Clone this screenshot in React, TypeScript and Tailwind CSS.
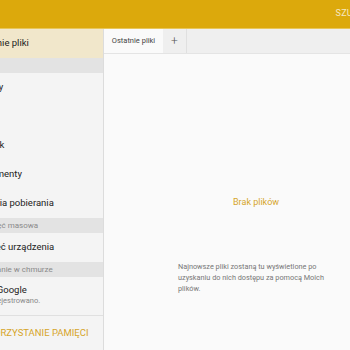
const font = { fontFamily: 'Roboto, "Noto Sans", sans-serif' }

function Item({ label, active = false }: { label: string; active?: boolean }) {
  return (
    <div className={`flex h-[29px] items-center ${active ? 'bg-[#f1e7cb]' : ''}`}>
      <span className="-ml-[26px] whitespace-nowrap text-[9.5px] text-[#222]">{label}</span>
    </div>
  )
}

function Header({ label, shift }: { label: string; shift: string }) {
  return (
    <div className="flex h-[15px] items-center bg-[#e3e3e3]">
      <span className={`whitespace-nowrap text-[8px] text-[#8a8a8a] ${shift}`}>{label}</span>
    </div>
  )
}

export default function App() {
  return (
    <div className="flex h-[350px] w-[350px] flex-col overflow-hidden bg-[#fafafa]" style={font}>
      {/* Top bar */}
      <div className="flex h-[29px] shrink-0 items-center justify-end overflow-hidden border-b border-[#e8c65a] bg-[#dca90c]">
        <span className="-mr-[20px] text-[9px] tracking-wide text-white/75">SZUKAJ</span>
      </div>

      <div className="flex min-h-0 flex-1">
        {/* Sidebar */}
        <div className="flex w-[104px] shrink-0 flex-col overflow-hidden border-r border-[#dcdcdc] bg-[#f4f4f4]">
          <Item label="Ostatnie pliki" active />
          <div className="h-[15px] bg-[#e3e3e3]" />
          <Item label="Obrazy" />
          <Item label="Filmy" />
          <Item label="Dźwięk" />
          <Item label="Dokumenty" />
          <Item label="Historia pobierania" />
          <Header label="Pamięć masowa" shift="-ml-[21px]" />
          <Item label="Pamięć urządzenia" />
          <Header label="Przechowywanie w chmurze" shift="-ml-[48px]" />
          <div className="flex h-[39px] flex-col justify-center border-b border-[#e0e0e0] pb-[2px]">
            <span className="-ml-[26px] whitespace-nowrap text-[9.5px] leading-[12px] text-[#222]">Dysk Google</span>
            <span className="-ml-[26px] whitespace-nowrap text-[7.5px] leading-[10px] text-[#888]">Nie zarejestrowano.</span>
          </div>
          <div className="flex h-[34px] items-center">
            <span className="-ml-[26px] whitespace-nowrap text-[9.5px] text-[#d6a52a]">WYKORZYSTANIE PAMIĘCI</span>
          </div>
        </div>

        {/* Main */}
        <div className="flex min-w-0 flex-1 flex-col">
          <div className="flex h-[25px] shrink-0 items-stretch border-b border-[#e4e4e4] bg-[#efefef]">
            <div className="flex w-[59px] items-center justify-center bg-[#fafafa] text-[7.5px] text-[#444]">
              Ostatnie pliki
            </div>
            <div className="flex w-[24px] items-center justify-center border-r border-[#e0e0e0] text-[12px] font-light text-[#555]">
              +
            </div>
          </div>
          <div className="flex flex-1 flex-col">
            <div className="ml-[129px] mt-[142px] text-[9px] text-[#d6a52a]">Brak plików</div>
            <p className="ml-[74px] mt-[51px] w-[160px] text-[7.3px] leading-[11px] text-[#777]">
              Najnowsze pliki zostaną tu wyświetlone po uzyskaniu do nich dostępu za pomocą Moich plików.
            </p>
          </div>
        </div>
      </div>
    </div>
  )
}
